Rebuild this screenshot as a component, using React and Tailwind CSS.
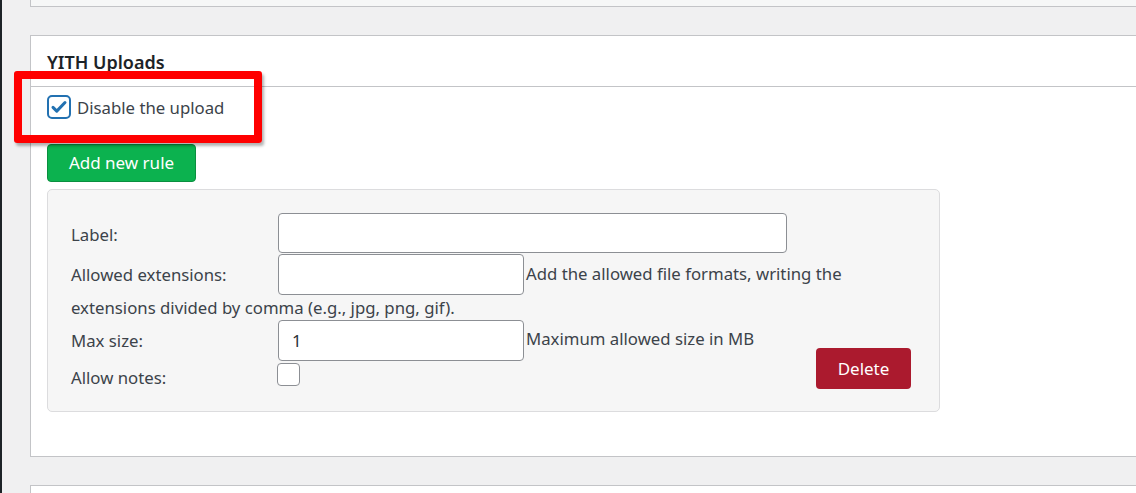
export default function App() {
  return (
    <div className="relative flex h-[493px] w-[1136px] overflow-hidden bg-[#f0f0f1] font-['Noto_Sans',sans-serif] text-[16.75px] text-[#3c434a]">
      {/* Admin sidebar edge */}
      <div className="w-[2px] shrink-0 bg-[#1d2327]" />

      <div className="flex-1 pl-[28px]">
        {/* Previous panel */}
        <div className="h-[7px] border-b border-l border-[#c3c4c7] bg-[#f6f7f7]" />

        {/* YITH Uploads panel */}
        <div className="mt-[28px] border-y border-l border-[#c3c4c7] bg-white">
          <div className="flex h-[51px] items-end border-b border-[#c3c4c7] pb-[15px] pl-[16px]">
            <h2 className="text-[18px] font-semibold leading-none text-[#1d2327]">YITH Uploads</h2>
          </div>

          <div className="pb-[44px] pl-[16px] pt-[8px]">
            <label className="flex h-[24px] items-center gap-[6px]">
              <span className="flex h-[24px] w-[24px] items-center justify-center rounded-[5px] border-2 border-[#2271b1] bg-white">
                <svg viewBox="0 0 24 24" className="h-[18px] w-[18px]" fill="none" stroke="#2271b1" strokeWidth={4} strokeLinecap="round" strokeLinejoin="round">
                  <path d="M4 12.5l5 5L20 6" />
                </svg>
              </span>
              <span className="pt-[2px]">Disable the upload</span>
            </label>

            <button className="mt-[25px] flex h-[38px] w-[149px] items-center justify-center rounded-[4px] border border-[#0a8f3f] bg-[#0cb24f] text-[17px] text-white">
              Add new rule
            </button>

            {/* Rule box */}
            <div className="mt-[7px] flex w-[893px] items-end rounded-[5px] border border-[#dcdcde] bg-[#f6f6f6] px-[23px] pb-[25px] pt-[23px]">
              <div className="min-w-0 flex-1 whitespace-nowrap">
                <div className="flex h-[40px] items-center">
                  <span className="w-[207px] shrink-0 pt-[3px]">Label:</span>
                  <input type="text" className="h-[40px] w-[509px] shrink-0 rounded-[4px] border border-[#8c8f94] bg-white px-[12px]" />
                </div>

                <div className="mt-[1px] flex h-[41px] items-center">
                  <span className="w-[207px] shrink-0">Allowed extensions:</span>
                  <input type="text" className="h-[41px] w-[246px] shrink-0 rounded-[4px] border border-[#8c8f94] bg-white px-[12px]" />
                  <span className="ml-[2px] pb-[1px]">Add the allowed file formats, writing the</span>
                </div>
                <div className="flex h-[25px] items-center">extensions divided by comma (e.g., jpg, png, gif).</div>

                <div className="flex h-[41px] items-center">
                  <span className="w-[207px] shrink-0">Max size:</span>
                  <input type="text" defaultValue="1" className="h-[41px] w-[246px] shrink-0 rounded-[4px] border border-[#8c8f94] bg-white px-[13px] text-[#2c3338]" />
                  <span className="ml-[2px] pb-[3px]">Maximum allowed size in MB</span>
                </div>

                <div className="mt-[2px] flex h-[23px] items-start">
                  <span className="w-[206px] shrink-0 pt-[3px] leading-[23px]">Allow notes:</span>
                  <span className="h-[23px] w-[23px] shrink-0 rounded-[4px] border border-[#8c8f94] bg-white" />
                </div>
              </div>

              <button className="mb-[-3px] mr-[5px] flex h-[41px] w-[95px] shrink-0 items-center justify-center rounded-[4px] bg-[#ab1a2e] text-[17px] text-white">
                Delete
              </button>
            </div>
          </div>
        </div>

        {/* Next panel */}
        <div className="mt-[28px] h-[40px] border-l border-t border-[#c3c4c7] bg-white" />
      </div>

      {/* Highlight annotation */}
      <div className="absolute left-[14px] top-[71px] h-[72px] w-[248px] rounded-[3px] border-[8px] border-[#ff0000] shadow-[2px_3px_3px_rgba(0,0,0,0.3)]" />
    </div>
  );
}
